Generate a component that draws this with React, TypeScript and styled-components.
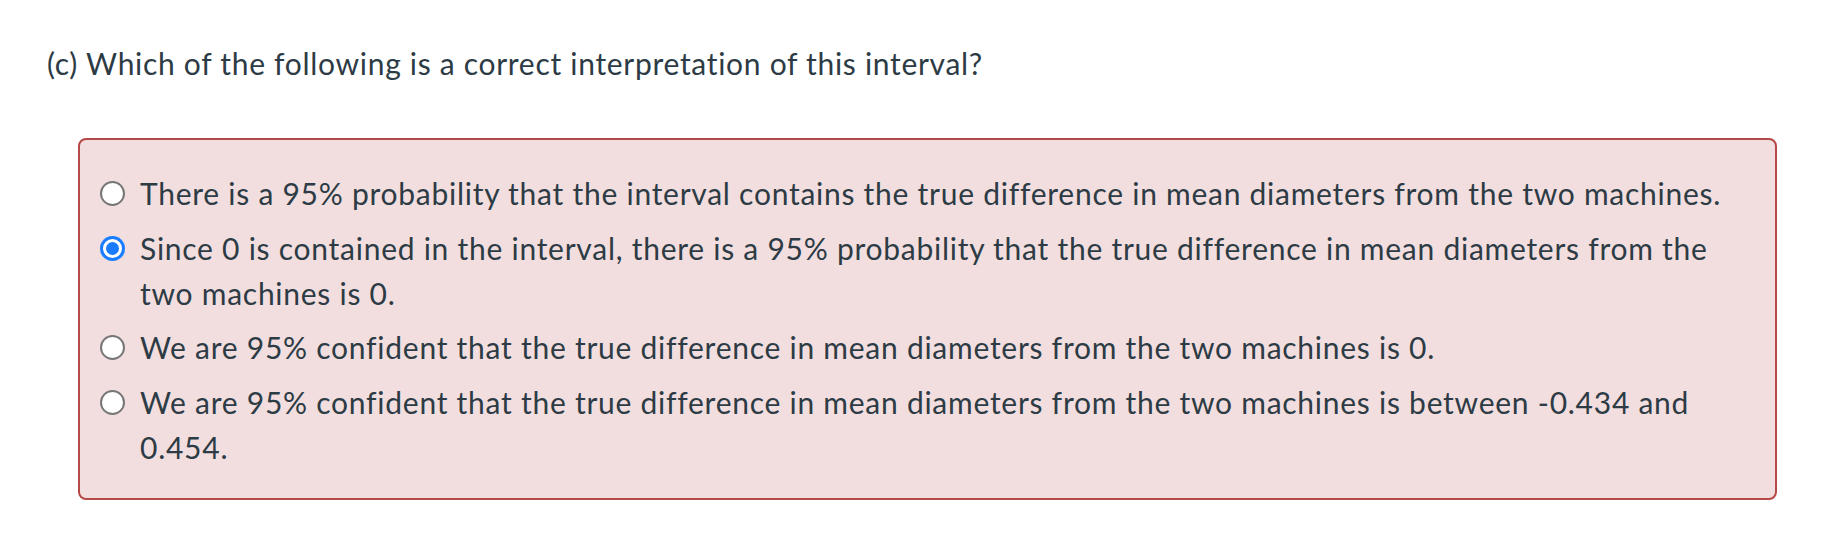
import { createGlobalStyle, styled } from "styled-components";

const GlobalStyle = createGlobalStyle`
  html, body {
    margin: 0;
    padding: 0;
    background: #ffffff;
  }
  body {
    font-family: Lato, "Open Sans", "Liberation Sans", sans-serif;
    color: #2d3b45;
  }
`;

const answers = [
  {
    id: "a",
    text: "There is a 95% probability that the interval contains the true difference in mean diameters from the two machines.",
    selected: false,
  },
  {
    id: "b",
    text: "Since 0 is contained in the interval, there is a 95% probability that the true difference in mean diameters from the two machines is 0.",
    selected: true,
  },
  {
    id: "c",
    text: "We are 95% confident that the true difference in mean diameters from the two machines is 0.",
    selected: false,
  },
  {
    id: "d",
    text: "We are 95% confident that the true difference in mean diameters from the two machines is between -0.434 and 0.454.",
    selected: false,
  },
];

export default function App() {
  return (
    <>
      <GlobalStyle />
      <Page>
        <QuestionText>
          (c) Which of the following is a correct interpretation of this interval?
        </QuestionText>
        <AnswerBox>
          {answers.map((a) => (
            <AnswerRow key={a.id}>
              <RadioSlot>
                <Radio $checked={a.selected} />
              </RadioSlot>
              <AnswerText>{a.text}</AnswerText>
            </AnswerRow>
          ))}
        </AnswerBox>
      </Page>
    </>
  );
}

const Page = styled.div`
  padding: 41px 61px 0 47px;
`;

const QuestionText = styled.p`
  margin: 0;
  font-size: 30px;
  line-height: 45px;
  letter-spacing: 0.7px;
`;

const AnswerBox = styled.div`
  margin: 52px 0 0 31px;
  border: 2px solid #b54849;
  border-radius: 8px;
  background: #f2dedf;
  padding: 31px 35px 28px 20px;
  display: flex;
  flex-direction: column;
  gap: 9.5px;
`;

const AnswerRow = styled.div`
  display: flex;
  align-items: flex-start;
  gap: 15px;
`;

const RadioSlot = styled.div`
  height: 45px;
  display: flex;
  align-items: center;
  flex-shrink: 0;
`;

const Radio = styled.span<{ $checked: boolean }>`
  box-sizing: border-box;
  width: 25px;
  height: 25px;
  border-radius: 50%;
  background: ${(p) => (p.$checked ? "#1a7cff" : "#ffffff")};
  border: ${(p) => (p.$checked ? "none" : "2px solid #777777")};
  box-shadow: ${(p) => (p.$checked ? "inset 0 0 0 3px #1a7cff, inset 0 0 0 6px #ffffff" : "none")};
`;

const AnswerText = styled.div`
  font-size: 30px;
  line-height: 45px;
  letter-spacing: 0.74px;
`;
